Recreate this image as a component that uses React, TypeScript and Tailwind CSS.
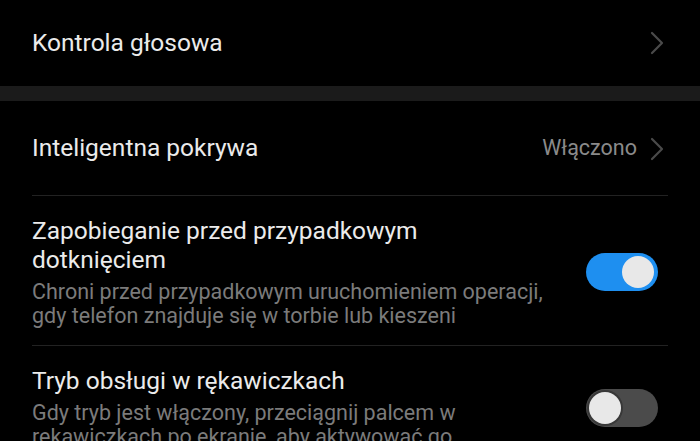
import type { ReactNode } from "react";

function Chevron() {
    return (
        <svg width="14" height="24" viewBox="0 0 14 24" fill="none" className="shrink-0">
            <path d="M2 2 L12 12 L2 22" stroke="#4a4a4a" strokeWidth="2.2" strokeLinecap="round" strokeLinejoin="round" />
        </svg>
    );
}

function Toggle({ on }: { on: boolean }) {
    return (
        <div
            className={`w-[72px] h-[38px] rounded-full p-[3px] flex items-center shrink-0 ${
                on ? "bg-[#1e8ff0] justify-end pr-[4px]" : "bg-[#4b4b4b] justify-start"
            }`}
        >
            <div
                className={`w-[32px] h-[32px] rounded-full bg-[#e8e8e8] ${
                    on ? "" : "shadow-[0_0_0_2px_#383838]"
                }`}
            />
        </div>
    );
}

function SwitchRow({ title, desc, on }: { title: ReactNode; desc: ReactNode; on: boolean }) {
    return (
        <div className="border-t border-[#222222] pt-[20px] pb-[17px] flex items-center justify-between">
            <div className="flex flex-col gap-[6px] w-[540px]">
                <div className="text-[24.5px] leading-[29px] text-[#ebebeb]">{title}</div>
                <div className="text-[21.5px] leading-[24px] text-[#7b7b7b]">{desc}</div>
            </div>
            <div className="mr-[10px]">
                <Toggle on={on} />
            </div>
        </div>
    );
}

export default function App() {
    return (
        <div className="w-full h-[441px] bg-black overflow-hidden font-['Roboto',sans-serif]">
            {/* Kontrola głosowa */}
            <div className="h-[86px] flex items-center justify-between pl-8 pr-9">
                <span className="text-[24.5px] text-[#ebebeb]">Kontrola głosowa</span>
                <Chevron />
            </div>

            <div className="h-[15px] bg-[#1b1b1b]" />

            <div className="px-8">
                {/* Inteligentna pokrywa */}
                <div className="h-[94px] flex items-center justify-between pt-[1px]">
                    <span className="text-[24.5px] text-[#ebebeb]">Inteligentna pokrywa</span>
                    <div className="flex items-center gap-[13px] pr-1">
                        <span className="text-[21.5px] text-[#8a8a8a]">Włączono</span>
                        <Chevron />
                    </div>
                </div>

                <SwitchRow
                    on={true}
                    title={<>Zapobieganie przed przypadkowym<br />dotknięciem</>}
                    desc={<>Chroni przed przypadkowym uruchomieniem operacji,<br />gdy telefon znajduje się w torbie lub kieszeni</>}
                />

                <SwitchRow
                    on={false}
                    title="Tryb obsługi w rękawiczkach"
                    desc={<>Gdy tryb jest włączony, przeciągnij palcem w<br />rękawiczkach po ekranie, aby aktywować go</>}
                />
            </div>
        </div>
    );
}
